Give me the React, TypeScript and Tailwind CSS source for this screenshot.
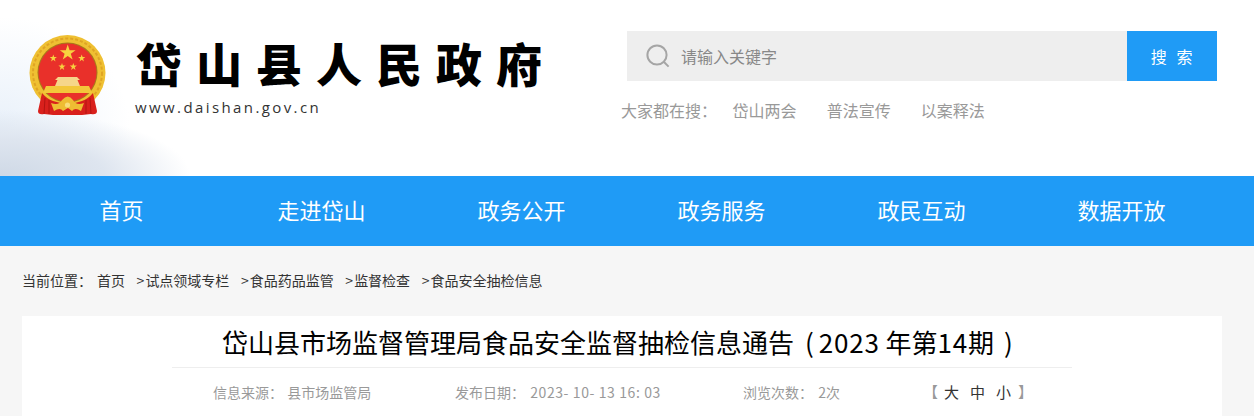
import React from "react";

const navItems = ["首页", "走进岱山", "政务公开", "政务服务", "政民互动", "数据开放"];
const hotWords = ["岱山两会", "普法宣传", "以案释法"];
const crumbs = ["试点领域专栏", "食品药品监管", "监督检查", "食品安全抽检信息"];

const Emblem = () => (
  <svg viewBox="9 2 78 84" className="w-[78px] h-[84px] shrink-0" style={{ filter: "blur(0.35px)" }}>
    {/* ring */}
    <circle cx="47.5" cy="40" r="38" fill="#efc032" />
    <circle cx="47.5" cy="40" r="34.5" fill="none" stroke="#dfa424" strokeWidth="2" strokeDasharray="3 2" />
    <circle cx="47.5" cy="39.5" r="30" fill="#a97a1a" />
    <circle cx="47.5" cy="39.5" r="29" fill="#e9302a" />
    {/* stars */}
    <path d="M47.7 11.5 L49.6 17.2 L55.6 17.2 L50.8 20.8 L52.6 26.5 L47.7 23 L42.8 26.5 L44.6 20.8 L39.8 17.2 L45.8 17.2 Z" fill="#f7d23f" />
    <path d="M33.3 21.5 L34.2 24 L36.9 24 L34.7 25.7 L35.5 28.4 L33.3 26.8 L31.1 28.4 L31.9 25.7 L29.7 24 L32.4 24 Z" fill="#f7d23f" />
    <path d="M61.7 21.5 L62.6 24 L65.3 24 L63.1 25.7 L63.9 28.4 L61.7 26.8 L59.5 28.4 L60.3 25.7 L58.1 24 L60.8 24 Z" fill="#f7d23f" />
    <path d="M42 30 L42.9 32.5 L45.6 32.5 L43.4 34.2 L44.2 36.9 L42 35.3 L39.8 36.9 L40.6 34.2 L38.4 32.5 L41.1 32.5 Z" fill="#f7d23f" />
    <path d="M53.3 30 L54.2 32.5 L56.9 32.5 L54.7 34.2 L55.5 36.9 L53.3 35.3 L51.1 36.9 L51.9 34.2 L49.7 32.5 L52.4 32.5 Z" fill="#f7d23f" />
    {/* gate */}
    <path d="M38 44 H57 L60 47 H57.5 L60 53 H35 L37.5 47 H35 Z" fill="#f6d68a" />
    <path d="M26 53 H69 L72 60 H23 Z" fill="#f3c73a" />
    {/* drapes */}
    <path d="M22 60 L18 78 Q18 82 24 81 L33 82 H62 L71 81 Q77 82 77 78 L73 60 Q68 66 62 68 L48 72 L33 68 Q27 66 22 60 Z" fill="#d9201c" />
    <path d="M25 65 L24 81 M29 67 L29 81 M70 65 L71 81 M66 67 L66 81" stroke="#a8120f" strokeWidth="0.8" />
    {/* wheat and knot */}
    <path d="M31 70 Q39 73 42 67 Q48 60 53 67 Q56 73 64 70 L61 78 Q55 74 52 78 L48 75 L43 78 Q40 74 34 78 Z" fill="#eebd33" />
    <circle cx="47.5" cy="72" r="2.6" fill="#f8dd7a" />
  </svg>
);

const Header = () => (
  <header className="h-[176px] flex bg-white bg-[radial-gradient(ellipse_190px_66px_at_0_100%,#cfd9e6_0%,#dee5ef_55%,transparent_100%),radial-gradient(ellipse_130px_110px_at_0_72%,#e9f1fa_0%,transparent_100%)]">
    <div className="flex w-[627px] pl-[29px] pt-[35px] shrink-0 items-start">
      <Emblem />
      <div className="ml-[29px]">
        <h1 className="mt-[-6px] text-[46px] leading-[66px] font-black tracking-[14px] text-black whitespace-nowrap">岱山县人民政府</h1>
        <p className="mt-[2px] ml-[-1px] text-[15px] leading-[20px] tracking-[2.4px] text-[#333] font-['Open_Sans',sans-serif]">www.daishan.gov.cn</p>
      </div>
    </div>
    <div className="pt-[31px]">
      <div className="flex w-[590px] h-[50px]">
        <div className="flex items-center flex-1 bg-[#eeeeee] pl-[19px]">
          <svg viewBox="0 0 24 24" className="w-[24px] h-[24px] text-[#a5a5a5]" fill="none" stroke="currentColor">
            <circle cx="11" cy="11" r="9.6" strokeWidth="2" />
            <path d="M18 18 L22.6 22.6" strokeWidth="2" />
          </svg>
          <span className="ml-[11px] text-[16px] text-[#888]">请输入关键字</span>
        </div>
        <button className="w-[90px] bg-[#1f9bf6] text-white text-[16px] tracking-[0.05em]">搜&nbsp;&nbsp;索</button>
      </div>
      <div className="flex mt-[17px] ml-[-6px] text-[16px] leading-[24px] text-[#999]">
        <span className="mr-[15.6px]">大家都在搜：</span>
        <div className="flex gap-[30px]">
          {hotWords.map((word) => (
            <span key={word}>{word}</span>
          ))}
        </div>
      </div>
    </div>
  </header>
);

const App = () => {
  return (
    <div className="h-[416px] overflow-hidden bg-[#f6f6f6] font-['Noto_Sans_CJK_SC',sans-serif]">
      <Header />

      <nav className="h-[70px] bg-[#1f9bf6]">
        <ul className="flex w-[1200px] ml-[21.5px] h-full">
          {navItems.map((item) => (
            <li key={item} className="w-[200px] flex items-center justify-center pb-[3px] text-[22px] text-white">
              {item}
            </li>
          ))}
        </ul>
      </nav>

      <div className="w-[1200px] ml-[22px]">
        {/* breadcrumb */}
        <div className="flex h-[70px] pb-[2px] items-center text-[14px] text-[#333] whitespace-nowrap">
          <span>当前位置：</span>
          <span className="ml-[5px]">首页</span>
          {crumbs.map((crumb) => (
            <span key={crumb} className="ml-[11.6px]">
              <span className="mr-px">&gt;</span>
              {crumb}
            </span>
          ))}
        </div>

        {/* article head */}
        <div className="bg-white h-[100px] pt-[7px]">
          <h2 className="w-[900px] mx-auto h-[45px] pl-[50px] border-b border-[#eeeeee] text-left text-[26px] leading-[38px] text-black whitespace-nowrap">
            岱山县市场监督管理局食品安全监督抽检信息通告
            <span className="ml-[11px] mr-[5px]">(</span><span className="tracking-[0.8px]">2023</span> 年第<span className="tracking-[0.8px]">14</span>期<span className="ml-[10px]">)</span>
          </h2>
          <div className="flex w-[900px] mx-auto mt-[13px] pl-[41px] text-[14px] leading-[22px] text-[#999] whitespace-nowrap">
            <span className="w-[242px]">信息来源： <span className="ml-px">县市场监管局</span></span>
            <span className="w-[288px]">发布日期： <span className="ml-[2px] tracking-[0.6px]">2023- 10- 13 16: 03</span></span>
            <span className="w-[180px]">浏览次数： <span className="ml-[2px]">2次</span></span>
            <span className="text-[15px] text-[#333]">
              <span className="mr-[6px] text-[#999]">【</span>
              <span className="tracking-[11px]">大中</span>小
              <span className="ml-[7px] text-[#999]">】</span>
            </span>
          </div>
        </div>
      </div>
    </div>
  );
};

export default App;
